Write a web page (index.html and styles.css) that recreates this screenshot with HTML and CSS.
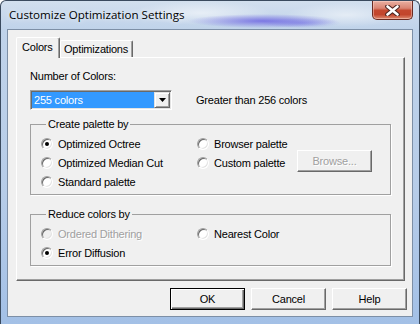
FILE: index.html
```html
<!DOCTYPE html>
<html>
<head>
<meta charset="utf-8">
<link rel="stylesheet" href="styles.css">
</head>
<body>
<div class="window">
  <div class="titlebar">
    <span class="title">Customize Optimization Settings</span>
    <div class="close">
      <svg width="15" height="11" viewBox="0 0 15 11">
        <path d="M2.5 1.5L12.5 9.5M12.5 1.5L2.5 9.5" stroke="#4a2420" stroke-width="4.6" stroke-linecap="round" fill="none"/>
        <path d="M2.5 1.5L12.5 9.5M12.5 1.5L2.5 9.5" stroke="#fff" stroke-width="2.6" stroke-linecap="round" fill="none"/>
      </svg>
    </div>
  </div>
  <div class="client">
    <div class="tabs">
      <div class="tab active">Colors</div>
      <div class="tab inactive">Optimizations</div>
    </div>
    <div class="panel">
      <div class="label">Number of Colors:</div>
      <div class="combo-row">
        <div class="combo">
          <div class="combo-value">255 colors</div>
          <div class="combo-btn">
            <svg width="7" height="4" viewBox="0 0 7 4"><path d="M0 0H7L3.5 4Z" fill="#000"/></svg>
          </div>
        </div>
        <span class="hint">Greater than 256 colors</span>
      </div>
      <fieldset class="group">
        <legend>Create palette by</legend>
        <div class="grid grid3">
          <div class="opt"><span class="radio checked"></span><span>Optimized Octree</span></div>
          <div class="opt"><span class="radio"></span><span>Browser palette</span></div>
          <div></div>
          <div class="opt"><span class="radio"></span><span>Optimized Median Cut</span></div>
          <div class="opt"><span class="radio"></span><span>Custom palette</span></div>
          <div class="btn browse">Browse...</div>
          <div class="opt"><span class="radio"></span><span>Standard palette</span></div>
        </div>
      </fieldset>
      <fieldset class="group group2">
        <legend>Reduce colors by</legend>
        <div class="grid grid2">
          <div class="opt disabled"><span class="radio"></span><span>Ordered Dithering</span></div>
          <div class="opt"><span class="radio"></span><span>Nearest Color</span></div>
          <div class="opt"><span class="radio checked"></span><span>Error Diffusion</span></div>
        </div>
      </fieldset>
    </div>
    <div class="buttons">
      <div class="btn default">OK</div>
      <div class="btn">Cancel</div>
      <div class="btn">Help</div>
    </div>
  </div>
</div>
</body>
</html>
```

FILE: styles.css
```css
body {
  margin: 0;
  font-family: "Liberation Sans", Arial, sans-serif;
  font-size: 11px;
  letter-spacing: -0.2px;
  color: #000;
}

.window {
  width: 420px;
  height: 324px;
  box-sizing: border-box;
  border: 1px solid #3a4a5e;
  border-bottom: none;
  border-radius: 6px 6px 0 0;
  padding: 0 6px 7px;
  display: flex;
  flex-direction: column;
  background:
    radial-gradient(ellipse 75px 7px at 262px 20px, rgba(105, 95, 225, 0.8), rgba(105, 95, 225, 0) 100%),
    radial-gradient(ellipse 40px 5px at 300px 22px, rgba(120, 120, 230, 0.5), rgba(120, 120, 230, 0) 100%),
    radial-gradient(ellipse 70px 12px at 200px 12px, rgba(255, 255, 255, 0.55), rgba(255, 255, 255, 0) 100%),
    radial-gradient(ellipse 60px 12px at 345px 14px, rgba(255, 255, 255, 0.5), rgba(255, 255, 255, 0) 100%),
    linear-gradient(to bottom, #d2dfee 0px, #c0d3ea 28px, #b6cce8 60%, #a3c0e6 100%);
}

.titlebar {
  height: 28px;
  flex-shrink: 0;
  display: flex;
  align-items: center;
}

.title {
  font-family: "Open Sans", "Noto Sans", sans-serif;
  font-size: 11.6px;
  letter-spacing: 0;
  line-height: 16px;
  padding-left: 2px;
  color: #000;
  text-shadow: 0 0 5px rgba(255, 255, 255, 0.9);
}

.close {
  margin-left: auto;
  align-self: flex-start;
  width: 41px;
  height: 19px;
  box-sizing: border-box;
  border: 1px solid #6a2b22;
  border-top: none;
  border-radius: 0 0 5px 5px;
  background: linear-gradient(to bottom, #eab0a2 0%, #d98472 40%, #c4482f 52%, #c2452c 75%, #dd8a70 100%);
  box-shadow: inset 0 0 0 1px rgba(255, 220, 210, 0.45);
  display: flex;
  align-items: center;
  justify-content: center;
}

.client {
  flex: 1;
  border: 1px solid #7d8fa6;
  background: #f0f0f0;
  display: flex;
  flex-direction: column;
  padding: 7px 0 0 8px;
}

.tabs {
  display: flex;
  height: 20px;
  align-items: flex-start;
}

.tab {
  box-sizing: border-box;
  border: 1px solid;
  border-color: #fff #696969 transparent #fff;
  border-bottom: none;
  border-radius: 2px 2px 0 0;
  background: #f0f0f0;
  line-height: 13px;
  box-shadow: inset -1px 0 #a0a0a0;
  white-space: nowrap;
}

.tab.active {
  position: relative;
  z-index: 1;
  width: 44px;
  height: 21px;
  padding: 3px 0 0 5px;
}

.tab.inactive {
  width: 73px;
  height: 17px;
  margin-top: 3px;
  padding: 2px 0 0 3px;
}

.panel {
  width: 389px;
  height: 224px;
  box-sizing: border-box;
  border: 1px solid;
  border-color: #fff #696969 #696969 #fff;
  box-shadow: inset -1px -1px #a0a0a0;
  padding: 12px 13px 0 13px;
}

.label {
  line-height: 13px;
}

.combo-row {
  display: flex;
  align-items: center;
  gap: 24px;
  height: 20px;
  margin-top: 7px;
}

.combo {
  width: 142px;
  height: 20px;
  box-sizing: border-box;
  border: 1px solid;
  border-color: #a0a0a0 #fff #fff #a0a0a0;
  box-shadow: inset 1px 1px #696969, inset -1px -1px #e3e3e3;
  background: #fff;
  padding: 1px;
  display: flex;
}

.combo-value {
  flex: 1;
  background: #3399ff;
  color: #fff;
  line-height: 16px;
  padding-left: 2px;
}

.combo-btn {
  width: 16px;
  height: 16px;
  box-sizing: border-box;
  border: 1px solid;
  border-color: #e3e3e3 #696969 #696969 #e3e3e3;
  box-shadow: inset 1px 1px #fff, inset -1px -1px #a0a0a0;
  background: #f0f0f0;
  display: flex;
  align-items: center;
  justify-content: center;
}

.hint {
  line-height: 13px;
}

.group {
  width: 361px;
  box-sizing: border-box;
  margin: 8px 0 0;
  padding: 3px 0 3px 10px;
  border: 1px solid #a0a0a0;
  box-shadow: 1px 1px 0 #fff;
}

.group2 {
  margin-top: 13px;
}

.group legend {
  margin-left: 5px;
  padding: 0 2px;
  line-height: 13px;
  font-size: 11px;
}

.grid {
  display: grid;
  grid-auto-rows: 19px;
}

.grid3 {
  grid-template-columns: 156px 100px 75px;
}

.grid2 {
  grid-template-columns: 156px auto;
}

.opt {
  display: flex;
  align-items: center;
  gap: 5px;
  white-space: nowrap;
}

.radio {
  width: 12px;
  height: 12px;
  flex-shrink: 0;
  box-sizing: border-box;
  border-radius: 50%;
  border: 1px solid;
  border-color: #a0a0a0 #fff #fff #a0a0a0;
  box-shadow: inset 1px 1px #696969, inset -1px -1px #e3e3e3;
  background: #fff;
  display: flex;
  align-items: center;
  justify-content: center;
}

.radio.checked::after {
  content: "";
  width: 4px;
  height: 4px;
  border-radius: 50%;
  background: #000;
}

.opt.disabled {
  color: #a0a0a0;
  text-shadow: 1px 1px 0 #fff;
}

.opt.disabled .radio {
  background: #f0f0f0;
}

.btn {
  width: 75px;
  height: 22px;
  box-sizing: border-box;
  border: 1px solid;
  border-color: #fff #696969 #696969 #fff;
  box-shadow: inset -1px -1px #a0a0a0;
  background: #f0f0f0;
  display: flex;
  align-items: center;
  justify-content: center;
}

.btn.browse {
  margin-top: -3px;
  color: #a0a0a0;
  text-shadow: 1px 1px 0 #fff;
}

.btn.default {
  border: 1px solid #000;
  box-shadow: inset 1px 1px #fff, inset -1px -1px #696969, inset -2px -2px #a0a0a0;
}

.buttons {
  display: flex;
  justify-content: flex-end;
  gap: 6px;
  margin-top: 7px;
  padding-right: 5px;
}
```
